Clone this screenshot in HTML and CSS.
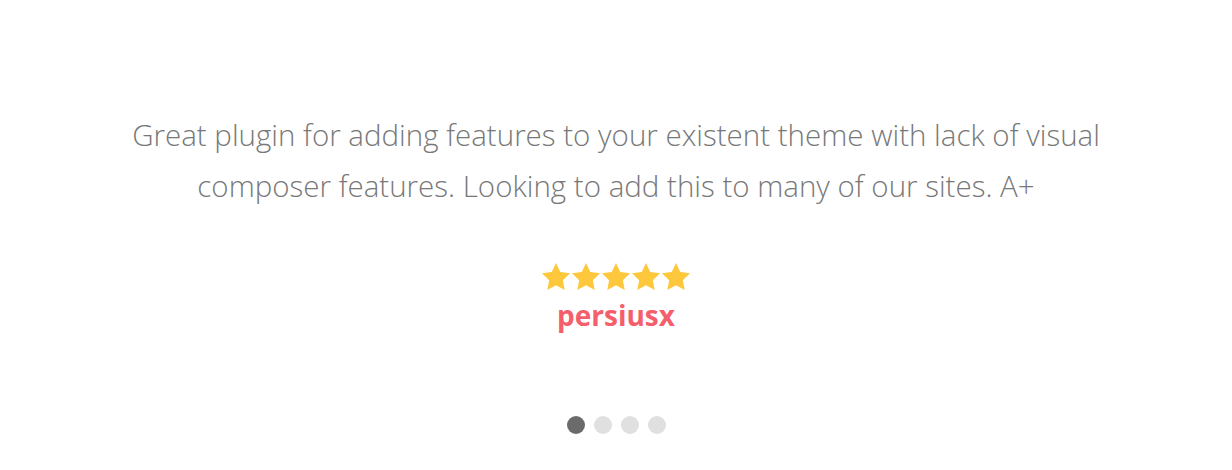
FILE: index.html
```html
<!DOCTYPE html>
<html lang="en">
<head>
<meta charset="utf-8">
<title>Testimonial</title>
<link rel="stylesheet" href="styles.css">
</head>
<body>
<section class="testimonial">
  <p class="quote">Great plugin for adding features to your existent theme with lack of visual<br>composer features. Looking to add this to many of our sites. A+</p>
  <div class="stars" aria-label="5 stars">
    <svg class="star" viewBox="1.2 1.2 21.6 20.6" preserveAspectRatio="none"><path d="M12 1.2l3.3 6.9 7.5 1-5.5 5.2 1.4 7.5L12 18.2l-6.7 3.6 1.4-7.5-5.5-5.2 7.5-1z"/></svg>
    <svg class="star" viewBox="1.2 1.2 21.6 20.6" preserveAspectRatio="none"><path d="M12 1.2l3.3 6.9 7.5 1-5.5 5.2 1.4 7.5L12 18.2l-6.7 3.6 1.4-7.5-5.5-5.2 7.5-1z"/></svg>
    <svg class="star" viewBox="1.2 1.2 21.6 20.6" preserveAspectRatio="none"><path d="M12 1.2l3.3 6.9 7.5 1-5.5 5.2 1.4 7.5L12 18.2l-6.7 3.6 1.4-7.5-5.5-5.2 7.5-1z"/></svg>
    <svg class="star" viewBox="1.2 1.2 21.6 20.6" preserveAspectRatio="none"><path d="M12 1.2l3.3 6.9 7.5 1-5.5 5.2 1.4 7.5L12 18.2l-6.7 3.6 1.4-7.5-5.5-5.2 7.5-1z"/></svg>
    <svg class="star" viewBox="1.2 1.2 21.6 20.6" preserveAspectRatio="none"><path d="M12 1.2l3.3 6.9 7.5 1-5.5 5.2 1.4 7.5L12 18.2l-6.7 3.6 1.4-7.5-5.5-5.2 7.5-1z"/></svg>
  </div>
  <div class="author">persiusx</div>
  <div class="dots">
    <span class="dot active"></span>
    <span class="dot"></span>
    <span class="dot"></span>
    <span class="dot"></span>
  </div>
</section>
</body>
</html>
```
FILE: styles.css
```css
html, body {
  margin: 0;
  padding: 0;
  background: #ffffff;
}
.testimonial {
  display: flex;
  flex-direction: column;
  align-items: center;
  padding-top: 109px;
  font-family: "Open Sans", "DejaVu Sans", sans-serif;
}
.quote {
  margin: 0;
  font-size: 29.5px;
  font-weight: 300;
  line-height: 51px;
  color: #787878;
  text-align: center;
}
.stars {
  display: flex;
  gap: 2px;
  margin-top: 52px;
}
.star {
  width: 28px;
  height: 27px;
  fill: #fdc83c;
}
.author {
  margin-top: 10px;
  font-size: 28px;
  font-weight: 700;
  line-height: 30px;
  color: #f45f6b;
}
.dots {
  display: flex;
  gap: 9px;
  margin-top: 86px;
}
.dot {
  width: 18px;
  height: 18px;
  border-radius: 50%;
  background: #e0e0e0;
}
.dot.active {
  background: #6b6b6b;
}
```
